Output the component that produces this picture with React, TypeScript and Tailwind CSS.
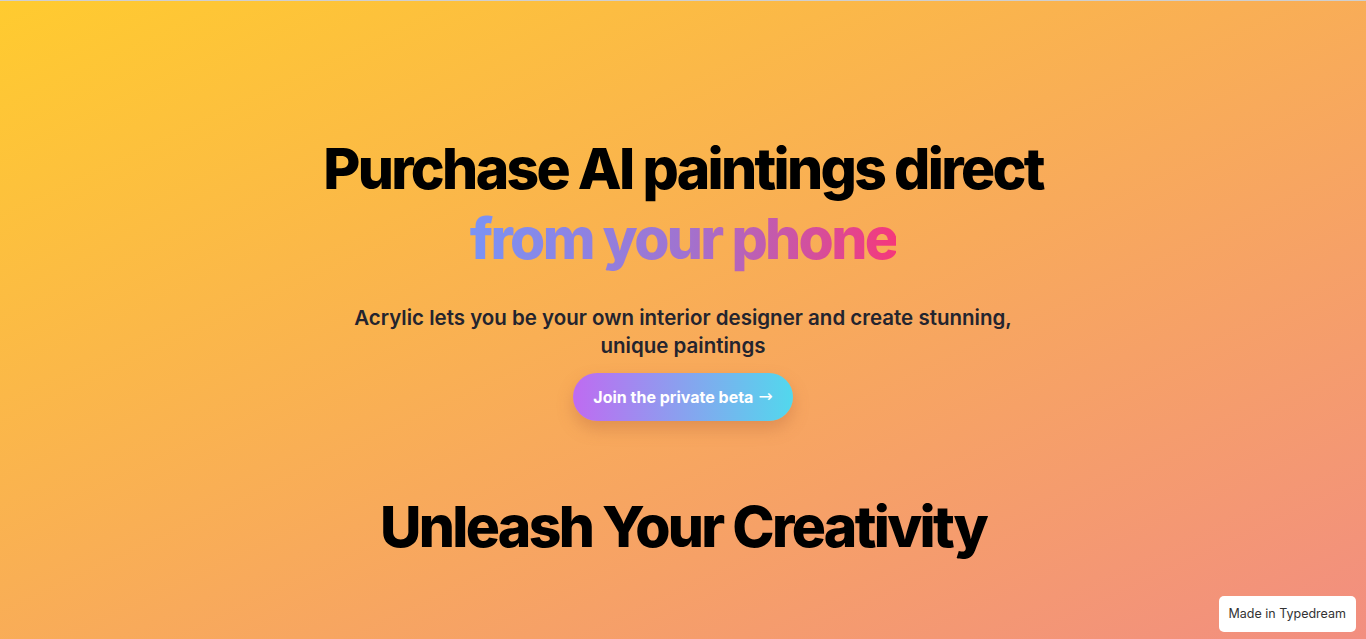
import React from "react";

export default function App() {
  return (
    <div
      className="relative w-full h-[639px] overflow-hidden border-t border-[#cfcfcf] bg-[linear-gradient(to_bottom_right,#ffcb2f,#f28e80)]"
      style={{ fontFamily: "Inter, 'Noto Sans', sans-serif" }}
    >
      <div className="flex flex-col items-center pt-[133px]">
        <h1 className="text-center text-[57px] leading-[70px] font-extrabold tracking-[-0.047em] text-black">
          Purchase AI paintings direct
          <br />
          <span className="bg-[linear-gradient(to_right,#7a93f5,#a073d0,#f5387b)] bg-clip-text text-transparent">
            from your phone
          </span>
        </h1>
        <p className="mt-[30px] text-center text-[20.5px] leading-[28px] font-semibold text-[#24242e] max-w-[700px]">
          Acrylic lets you be your own interior designer and create stunning, unique paintings
        </p>
        <button className="mt-[13px] h-[48px] pl-[20px] pr-[20px] rounded-full bg-[linear-gradient(to_right,#bf6bf1,#52d8ed)] text-white text-[16px] font-bold shadow-[0_8px_16px_rgba(180,100,60,0.35)] flex items-center">
          Join the private beta
          <span className="ml-[5px] text-[17px] font-normal" style={{ fontFamily: "'DejaVu Sans', sans-serif" }}>
            →
          </span>
        </button>
        <h2 className="mt-[71px] text-center text-[57px] leading-[70px] font-extrabold tracking-[-0.047em] text-black">
          Unleash Your Creativity
        </h2>
      </div>
      <div className="absolute right-[10px] bottom-[7px] h-[36px] px-[10px] flex items-center bg-white rounded-[5px] text-[12.5px] text-[#333]">
        Made in Typedream
      </div>
    </div>
  );
}
